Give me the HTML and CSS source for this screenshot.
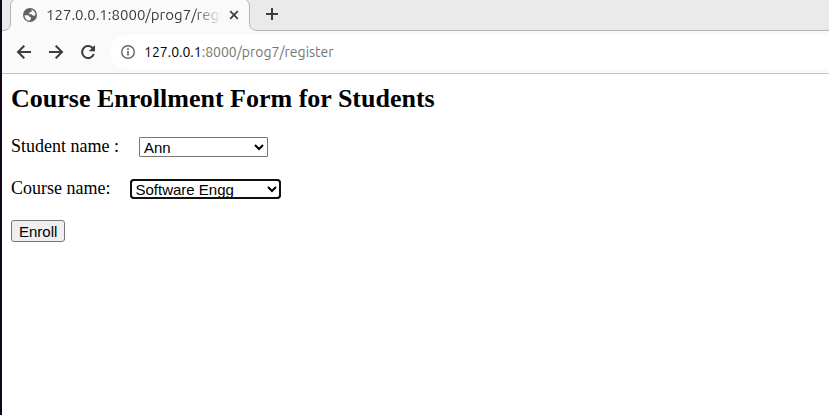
FILE: index.html
```html
<!DOCTYPE html>
<html lang="en">
<head>
<meta charset="utf-8">
<title>Course Enrollment</title>
<link rel="stylesheet" href="styles.css">
</head>
<body>
<div class="window">
  <header class="chrome">
    <div class="tabstrip">
      <svg class="edge" width="12" height="31" viewBox="0 0 12 31" aria-hidden="true">
        <path d="M12 0C9.500 1.500 8.500 3 8.500 6V23C8.500 28 6 30.500 0 30.500V31H12Z" fill="#fafafa"/>
        <path d="M12 -.5C9.500 1.500 8.500 3 8.500 6V23C8.500 28 6 30.500 0 30.500" fill="none" stroke="#b4b4b4"/>
      </svg>
      <div class="tab">
        <svg width="16" height="16" viewBox="0 0 16 16" aria-hidden="true">
          <circle cx="8" cy="8" r="7" fill="#5f6368"/>
          <path d="M2.500 8.200L5.500 8.300C7 8.400 7.600 9.200 7.600 10.300H9V12L7.300 13.700C4.500 13.500 2.600 11.300 2.500 8.200Z" fill="#fafafa"/>
          <path d="M9.600 2.700C12 3.400 13.500 5.400 13.500 7.700C12.800 8.900 11.600 9.100 10.700 8.500L9.800 7.300H7.300V5.600L9.600 4.700Z" fill="#fafafa"/>
        </svg>
        <span class="tab-title">127.0.0.1:8000/prog7/register</span>
        <button class="icon-button" type="button" aria-label="Close tab">
          <svg width="10" height="10" viewBox="0 0 10 10"><path d="M1.200 1.200L8.800 8.800M8.800 1.200L1.200 8.800" stroke="#3c3c3c" stroke-width="1.700"/></svg>
        </button>
      </div>
      <svg class="edge" width="12" height="31" viewBox="0 0 12 31" aria-hidden="true">
        <path d="M0 0C2.500 1.500 3.500 3 3.500 6V23C3.500 28 6 30.500 12 30.500V31H0Z" fill="#fafafa"/>
        <path d="M0 -.5C2.500 1.500 3.500 3 3.500 6V23C3.500 28 6 30.500 12 30.500" fill="none" stroke="#b4b4b4"/>
      </svg>
      <div class="strip-rest">
        <button class="icon-button" type="button" aria-label="New tab">
          <svg width="12" height="12" viewBox="0 0 12 12"><path d="M6 0V12M0 6H12" stroke="#3c3c3c" stroke-width="2"/></svg>
        </button>
      </div>
    </div>
    <div class="toolbar">
      <nav class="nav">
        <button class="icon-button" type="button" aria-label="Back">
          <svg width="16" height="16" viewBox="0 0 16 16"><path d="M15 8H2.500M8.300 1.700L2 8L8.300 14.300" fill="none" stroke="#3c3c3c" stroke-width="2"/></svg>
        </button>
        <button class="icon-button" type="button" aria-label="Forward">
          <svg width="16" height="16" viewBox="0 0 16 16"><path d="M1 8H13.500M7.700 1.700L14 8L7.700 14.300" fill="none" stroke="#3c3c3c" stroke-width="2"/></svg>
        </button>
        <button class="icon-button" type="button" aria-label="Reload">
          <svg width="16" height="16" viewBox="0 0 16 16"><path d="M13.800 10A6 6 0 1 1 12.300 3.800L13.500 5" fill="none" stroke="#3c3c3c" stroke-width="2"/><path d="M15 1V7.200H8.800Z" fill="#3c3c3c"/></svg>
        </button>
      </nav>
      <div class="address">
        <svg width="16" height="16" viewBox="0 0 16 16" aria-hidden="true"><circle cx="8" cy="8" r="6.300" fill="none" stroke="#5f6368" stroke-width="1.400"/><path d="M8 7V11.500M8 4.300V5.900" stroke="#5f6368" stroke-width="1.600"/></svg>
        <span class="url"><span class="host">127.0.0.1</span>:8000/prog7/register</span>
      </div>
    </div>
  </header>
  <main class="page">
    <h1>Course Enrollment Form for Students</h1>
    <form>
      <div class="field student">
        <label for="student">Student name :</label>
        <select id="student"><option>Ann</option></select>
      </div>
      <div class="field course">
        <label for="course">Course name:</label>
        <select id="course"><option>Software Engg</option></select>
      </div>
      <button class="enroll" type="button">Enroll</button>
    </form>
  </main>
</div>
</body>
</html>
```
FILE: styles.css
```css
* {
  box-sizing: border-box;
}

body {
  margin: 0;
  background: #fff;
}

.window {
  min-height: 100vh;
  border-left: 2px solid #14061a;
}

.chrome {
  font-family: Ubuntu, "Noto Sans", sans-serif;
  background: #fafafa;
  border-bottom: 1px solid #c4c4c4;
}

.chrome svg {
  display: block;
  flex: none;
}

.tabstrip {
  display: flex;
  height: 31px;
  background: #eaeaea;
}

.tab {
  display: flex;
  align-items: center;
  width: 232px;
  padding: 0 3px 2px 8px;
  background: #fafafa;
}

.tab-title {
  flex: 1;
  margin: 0 3px 0 8px;
  overflow: hidden;
  color: #3c3c3c;
  font-size: 15px;
  line-height: 20px;
  white-space: nowrap;
  mask-image: linear-gradient(to right, #000 84%, transparent);
}

.icon-button {
  padding: 4px;
  border: 0;
  background: none;
}

.strip-rest {
  display: flex;
  flex: 1;
  align-items: center;
  padding: 0 4px 2px;
  border-bottom: 1px solid #b4b4b4;
}

.toolbar {
  display: flex;
  align-items: center;
  gap: 10px;
  height: 42px;
  padding-left: 10px;
}

.nav {
  display: flex;
  gap: 8px;
}

.address {
  display: flex;
  flex: 1;
  align-items: center;
  gap: 8px;
  height: 34px;
  padding-left: 10px;
  border-radius: 17px 0 0 17px;
  background: #fff;
}

.url {
  color: #757575;
  font-size: 14px;
  line-height: 20px;
}

.host {
  color: #000;
}

.page {
  padding: 10px 9px;
  color: #000;
  font-family: "Liberation Serif", serif;
  font-size: 18px;
  line-height: 21px;
}

h1 {
  margin: 0 0 22px;
  font-size: 26px;
  line-height: 30px;
}

form {
  display: flex;
  flex-direction: column;
  align-items: flex-start;
  gap: 21px;
}

.field {
  display: flex;
  align-items: flex-end;
  gap: 20px;
}

select,
.enroll {
  color: #000;
  font-family: "Liberation Sans", sans-serif;
  font-size: 15px;
}

select {
  height: 20px;
  border: 1px solid #767676;
  border-radius: 1px;
  background-color: #fff;
}

.student select {
  width: 129px;
}

.course select {
  width: 151px;
  border-color: #101010;
  border-radius: 4px;
  outline: 2px solid #101010;
  outline-offset: -2px;
}

.enroll {
  height: 22px;
  padding: 0 7px;
  border: 1px solid #767676;
  border-radius: 3px;
  background: #efefef;
}
```
